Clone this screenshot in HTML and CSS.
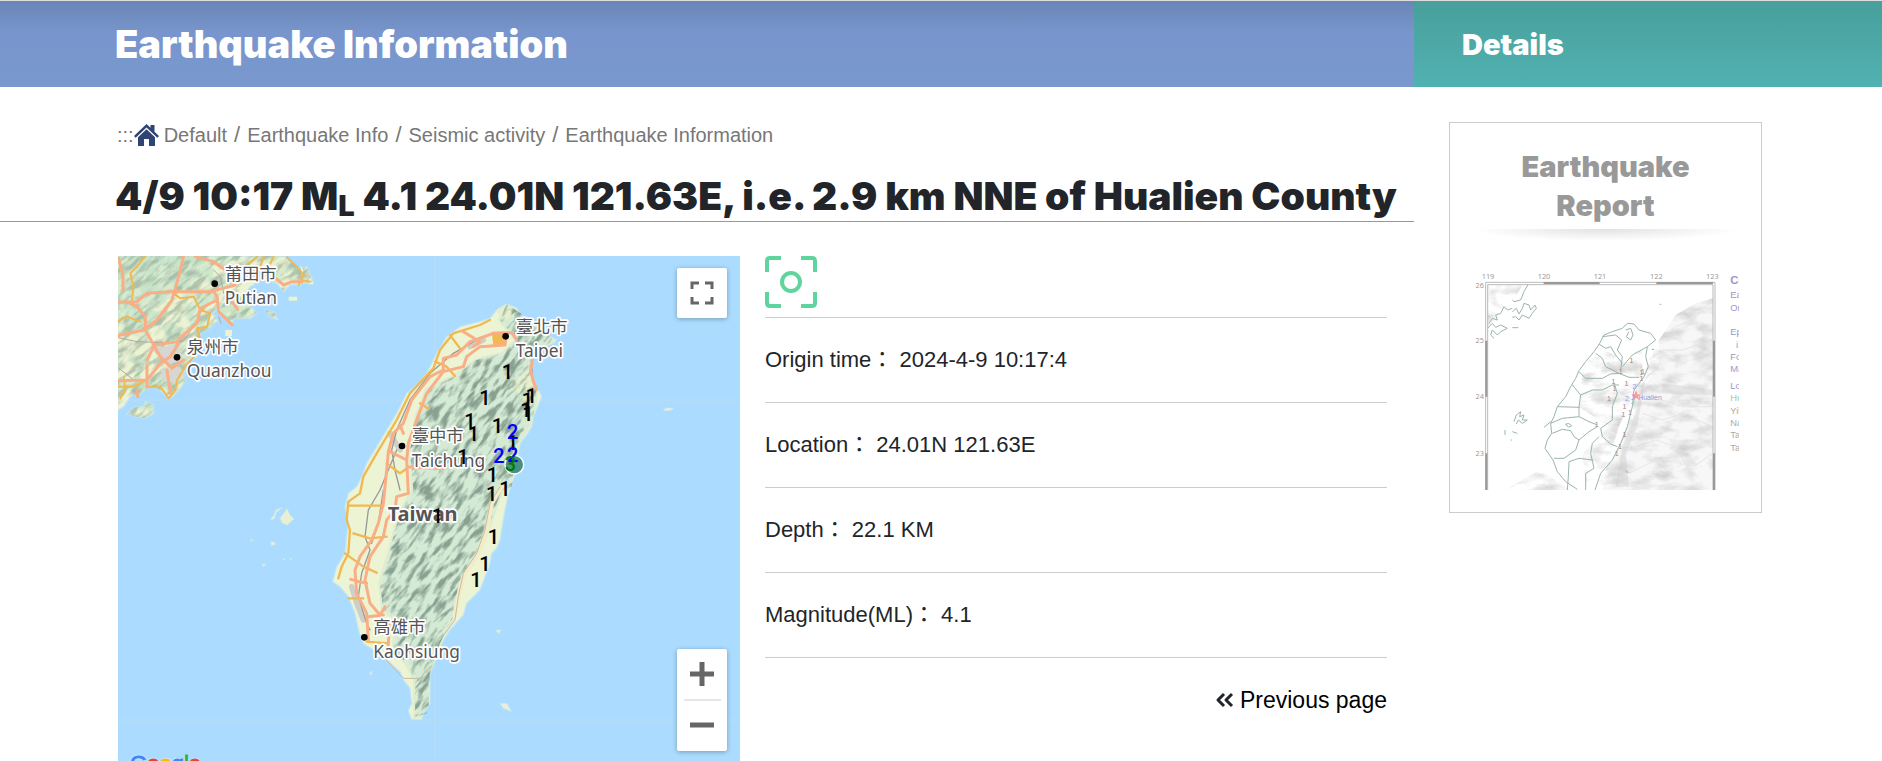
FILE: index.html
```html
<!DOCTYPE html>
<html lang="en">
<head>
<meta charset="utf-8">
<meta name="viewport" content="width=device-width, initial-scale=1">
<title>Earthquake Information</title>
<link rel="stylesheet" href="styles.css">
</head>
<body>
<div class="page">
  <main class="main">
    <header class="band band-main"><h2 class="band-title">Earthquake Information</h2></header>
    <nav class="crumbs" aria-label="Breadcrumb">
      <span>:::</span>
      <svg class="home" viewBox="0 0 25 22" aria-hidden="true"><path fill="#2f4474" d="M12.500 0 16.500 3.800V1h4v6.700l4.500 4.300-1.700 1.700L12.500 3.500 1.700 13.700 0 12z"/><path fill="#2f4474" d="M12.500 5.300 21 13.300V22h-6v-7h-5v7H4v-8.700z"/></svg>
      <a href="#">Default</a><i>/</i><a href="#">Earthquake Info</a><i>/</i><a href="#">Seismic activity</a><i>/</i><span>Earthquake Information</span>
    </nav>
    <h1 class="title">4/9 10:17 M<sub>L</sub> 4.1 24.01N 121.63E, i.e. 2.9 km NNE of Hualien County</h1>
    <div class="content">
      <section class="map" aria-label="Map">
        <svg class="map-art" viewBox="0 0 622 520" preserveAspectRatio="xMidYMin slice">
          <defs>
            <filter id="relief" x="0" y="0" width="1" height="1" color-interpolation-filters="sRGB">
              <feTurbulence type="fractalNoise" baseFrequency="0.06 0.2" numOctaves="3" seed="8"/>
              <feColorMatrix values="0 0 0 0 0.50  0 0 0 0 0.60  0 0 0 0 0.54  4 0 0 0 -1.75"/>
            </filter>
            <filter id="patches" x="0" y="0" width="1" height="1" color-interpolation-filters="sRGB">
              <feTurbulence type="fractalNoise" baseFrequency="0.05" numOctaves="3" seed="3"/>
              <feColorMatrix values="0 0 0 0 0.78  0 0 0 0 0.89  0 0 0 0 0.79  7 0 0 0 -3.2"/>
            </filter>
            <path id="island" d="M560 42 590 55 600 75 640 95 665 125 690 140 710 150 700 160 670 170 640 190 628 210 630 250 640 280 655 300 665 320 655 345 640 380 635 410 620 435 600 460 595 490 590 540 575 580 563 620 555 660 548 700 540 750 530 775 515 790 508 830 495 860 480 900 440 940 430 975 390 1020 370 1050 350 1100 330 1150 330 1240 310 1270 305 1288 275 1288 265 1262 275 1240 270 1195 250 1170 240 1145 200 1110 160 1080 130 1060 118 1030 105 970 85 920 60 890 38 875 50 830 75 790 80 740 85 700 75 650 85 610 110 590 125 560 140 520 170 470 200 420 230 370 260 310 290 285 320 250 350 190 380 140 420 110 480 95 510 85 530 60z"/>
            <path id="hills" d="M560 42 640 95 700 150 630 200 650 300 640 380 595 460 575 590 545 600 510 700 480 780 430 860 400 980 360 1060 330 1150 325 1270 285 1280 285 1170 260 1120 220 1080 230 990 190 960 180 880 210 780 225 720 245 660 280 600 270 480 290 380 320 300 400 260 470 210 550 190 590 150 540 90z"/>
            <path id="coast" d="M0 18H500L540 50 560 75 550 105 520 103 500 125 480 100 440 90 400 110 385 150 420 190 400 205 350 205 345 225 330 200 300 180 285 190 303 213 270 240 250 250 245 280 240 320 220 330 200 370 205 395 180 430 155 448 130 420 100 410 70 430 40 440 20 470 0 482zM545 60 570 50 588 95 560 100zM30 492 55 470 80 470 85 455 110 465 110 490 85 505 60 500zM445 180 470 185 482 208 460 202z"/>
            <clipPath id="clip-hills"><use href="#hills"/></clipPath>
            <clipPath id="clip-island"><use href="#island"/></clipPath>
            <clipPath id="clip-coast"><use href="#coast"/></clipPath>
          </defs>
          <rect width="900" height="760" y="-100" x="-100" fill="#abdcff"/>
          <path stroke="#bcdcf3" fill="none" d="M0 144H622M0 464H622M317 0V520"/>
          <g transform="translate(-1 -6) scale(.33333)">
            <use href="#coast" fill="#ecf3d3" stroke="#c5e6f2" stroke-width="4"/>
            <g clip-path="url(#clip-coast)">
              <path fill="#c9e6cd" opacity=".6" d="M0 18H300L250 80 150 150 60 200 0 230z"/>
              <g transform="rotate(-40) scale(3)">
                <rect x="-130" y="-20" width="330" height="330" filter="url(#patches)" opacity=".8"/>
                <rect x="-130" y="-20" width="330" height="330" filter="url(#relief)" opacity=".5"/>
              </g>
              <path fill="#d6d6d3" d="M100 295 180 285 200 330 150 345zM130 360 190 350 200 370 180 400 140 395z"/>
            </g>
            <path fill="#ecf3d3" d="M515 140h25v12h-25zM575 95h14v8h-14zM325 240h20v18h-20zM550 45l10 15-5 20z"/>
            <g fill="none" stroke-linejoin="round" stroke-linecap="round">
              <path stroke="#aaa" stroke-width="3" d="M0 262 60 275 140 278 200 272 250 200M290 60 310 80 320 130M305 200 312 220M0 350 50 390"/>
              <path stroke="#f0b951" stroke-width="6" d="M85 18 60 50 40 70 50 110 45 150M170 130 190 145 230 140 250 180 280 190 270 230 240 235 250 270M0 215 30 200 70 215M0 410 50 410 80 395M20 380 25 420 10 445M90 410 130 410 155 445 175 420 180 390 205 350 230 320M395 40 420 20M430 50 440 20M460 40 470 20M510 22 540 50 560 75 545 105M580 95 555 90"/>
              <path stroke="#f9ae86" stroke-width="9" d="M5 25 18 80 18 120M200 18 185 80 165 150 120 210 80 240 0 258M0 157 60 155 90 130 160 125 290 125 300 140 305 185 345 224M300 150 250 175 240 220 205 250 180 275 110 285 85 240 85 200 60 170 30 155M235 20 290 35 325 60M280 125 355 105M345 155 362 178M185 280 160 320 130 340 90 390 0 392M110 285 130 320 165 355 200 330M90 345 90 410M150 360 160 430M470 80 500 105 525 95 555 95M60 420 62 440M90 330 110 290"/>
            </g>
          </g>
          <g transform="translate(202 34) scale(.33333)">
            <use href="#island" fill="#edf4d4" stroke="#c5e6f2" stroke-width="4"/>
            <g clip-path="url(#clip-island)">
              <use href="#hills" fill="#d4ead5" stroke="#dcedd3" stroke-width="12"/>
              <path fill="#e5efcd" d="M520 60 550 40 590 70 560 90zM560 290 640 230 640 290 600 310z"/>
            </g>
            <g clip-path="url(#clip-hills)">
              <g transform="rotate(-52) scale(3)">
                <rect x="-380" y="20" width="600" height="500" filter="url(#relief)" opacity=".9"/>
              </g>
            </g>
            <g fill="none" stroke-linejoin="round" stroke-linecap="round">
              <path stroke="#f3ecc9" stroke-width="14" d="M545 590 515 640 500 720 475 790 430 860 415 920 405 980"/>
              <path stroke="#c9b9a0" stroke-width="3" d="M540 590 510 640 495 720 470 790 430 850 415 920 405 990 375 1030M195 1105 250 1165 300 1165 330 1130"/>
              <path stroke="#cfcfca" stroke-width="16" d="M95 890 110 940 130 990M210 430 240 480M450 170 490 150"/>
              <path stroke="#999" stroke-width="4" d="M520 130 470 150 400 190 330 250 270 330 230 420 215 480 225 540 240 600M230 480 180 600 145 660 135 740 150 780 125 850 115 920 140 1000 150 1020M190 600 175 700 155 760"/>
              <path stroke="#f0b951" stroke-width="7" d="M510 90 480 105 400 130 360 180 340 235 270 310 230 390 170 490 130 560 120 610 85 635 80 690 90 720 85 790 65 830 55 865M85 647 190 647M100 730 150 745 200 740M75 790 130 830 170 848M390 135 420 175M345 215 380 230 405 258M300 340 325 356M200 520 240 550 262 535M85 925 130 925M140 1055 205 1060"/>
              <path fill="#f0b951" stroke="none" d="M515 125h40v40h-35z"/>
              <path stroke="#f9ae86" stroke-width="9" d="M590 150 575 128 520 130 450 155 410 195 370 205 370 240 330 260 275 330 250 400 220 430 205 485 200 540 190 640 175 700 155 750 120 800 105 840 110 910 140 970 145 1050M560 130 555 165 480 170 440 200 430 230 370 245 320 310 290 390 265 460 260 510 210 485M430 125 480 155 460 170M260 510 265 610 230 620 225 660 200 690 190 740 150 800 135 870 150 940 180 975 195 950M240 405 250 430M265 530 370 536M145 980 190 975M92 868 140 880M208 1005 205 1065M637 210 632 240 640 275 650 298"/>
            </g>
            <path fill="#e9efd2" d="M1030 358 1045 353 1062 356 1050 362 1034 362zM527 1020h15l-5 12zM540 1240h20l15 25-25-10zM148 1150l10-8-5 14zM-120 685l15-20 5-10 10 20 12 12-20 18-15-5zM-150 690l12-15 5-15 22-8-20 15-6 20zM-148 755l8 0 8 8-14 4zM-174 822h12l-8 8zM-208 749h6v4h-6zM-110 806h5v4h-5zM-90 804h4v5h-4z" stroke="#c5e6f2" stroke-width="2"/>
          </g>
          <g class="places" transform="translate(-1 -6) scale(.33333)">
            <circle cx="293" cy="101" r="10"/><circle cx="180" cy="322" r="10"/>
            <text x="323" y="90">莆田市</text><text x="323" y="163">Putian</text>
            <text x="209" y="310">泉州市</text><text x="209" y="381">Quanzhou</text>
          </g>
          <g class="places" transform="translate(202 34) scale(.33333)">
            <circle cx="557" cy="139" r="10"/><circle cx="246" cy="468" r="10"/><circle cx="133" cy="1042" r="10"/>
            <text x="587" y="129">臺北市</text><text x="587" y="201">Taipei</text>
            <text x="275" y="457">臺中市</text><text x="275" y="531">Taichung</text>
            <text class="country" x="203" y="692">Taiwan</text>
            <text x="160" y="1030">高雄市</text><text x="160" y="1103">Kaohsiung</text>
          </g>
          <g class="intensity" transform="translate(202 34) scale(.33333)">
            <text x="562" y="267">1</text><text x="495" y="344">1</text><text x="450" y="415">1</text><text x="460" y="454">1</text><text x="532" y="429">1</text><text x="622" y="350">1</text><text x="634" y="339">1</text><text x="618" y="382">1</text><text x="624" y="394">1</text><text x="577" y="480">1</text><text x="429" y="522">1</text><text x="517" y="576">1</text><text x="515" y="634">1</text><text x="555" y="619">1</text><text x="352" y="699">1</text><text x="520" y="762">1</text><text x="495" y="844">1</text><text x="468" y="892">1</text>
            <circle cx="583" cy="524" r="28" fill="#4a9080" stroke="#fff" stroke-width="4"/>
            <g fill="#00f"><text x="578" y="448">2</text><text x="537" y="519">2</text><text x="578" y="515">2</text></g>
            <text x="571" y="544" fill="#007a00">3</text>
          </g>
        </svg>
        <button class="map-btn fullscreen" aria-label="Toggle fullscreen view"><svg width="24" height="24" viewBox="0 0 24 24"><path fill="none" stroke="#666" stroke-width="3" d="M2 8V2H9M15 2H22V8M22 16V22H15M9 22H2V16"/></svg></button>
        <div class="zoom">
          <button class="map-btn" aria-label="Zoom in"><svg width="24" height="24" viewBox="0 0 24 24"><path stroke="#666" stroke-width="5" d="M0 12H24M12 0V24"/></svg></button>
          <button class="map-btn" aria-label="Zoom out"><svg width="24" height="24" viewBox="0 0 24 24"><path stroke="#666" stroke-width="5" d="M0 12H24"/></svg></button>
        </div>
        <a class="google" href="#"><b class="g-blue">G</b><b class="g-red">o</b><b class="g-yellow">o</b><b class="g-blue">g</b><b class="g-green">l</b><b class="g-red">e</b></a>
      </section>
      <section class="facts">
        <div class="focus"><svg width="52" height="52" viewBox="0 0 52 52" fill="none" stroke="#5fd49d" stroke-width="4"><path d="M2 16V5Q2 2 5 2H16M36 2H47Q50 2 50 5V16M50 36V47Q50 50 47 50H36M16 50H5Q2 50 2 47V36"/><circle cx="26" cy="26" r="9"/></svg></div>
        <ul class="list">
          <li>Origin time： 2024-4-9 10:17:4</li>
          <li>Location： 24.01N 121.63E</li>
          <li>Depth： 22.1 KM</li>
          <li>Magnitude(ML)： 4.1</li>
        </ul>
        <a class="back" href="#"><svg width="19" height="16" viewBox="0 0 19 16" fill="none" stroke="#212529" stroke-width="3" stroke-linejoin="round"><path d="M9 2 3 8 9 14M17 2 11 8 17 14"/></svg>Previous page</a>
      </section>
    </div>
  </main>
  <aside class="side">
    <header class="band band-side"><h2 class="side-title">Details</h2></header>
    <a class="card" href="#">
      <h3 class="card-title">Earthquake Report</h3>
      <div class="card-shade"></div>
      <svg class="report" viewBox="129 96 804 654">
        <defs>
          <filter id="seabed" x="0" y="0" width="1" height="1" color-interpolation-filters="sRGB">
            <feTurbulence type="fractalNoise" baseFrequency="0.015 0.03" numOctaves="5" seed="5"/>
            <feColorMatrix values="0 0 0 0 0.78  0 0 0 0 0.78  0 0 0 0 0.78  2.200 0 0 0 -0.9"/>
          </filter>
          <clipPath id="sea"><path d="M852 175 800 190 740 225 690 300 660 370 620 450 600 550 560 640 510 700 495 750H852zM176 135H280L250 190 200 240 176 260zM230 750 330 690 380 720 420 750zM500 320 570 350 640 330 640 400 570 560 530 690 470 740 460 640 540 560 450 500 460 400z"/></clipPath>
        </defs>
        <path fill="#f1f1f1" opacity=".6" d="M852 175 800 190 740 225 690 300 690 370 640 450 600 550 560 640 520 750H852z"/>
        <path fill="#ccc" opacity=".4" d="M690 380 650 410 640 470 625 560 590 640 600 740 560 740 580 620 620 520 640 430zM700 430 850 450 850 465 700 460z"/>
        <g clip-path="url(#sea)"><rect x="170" y="130" width="690" height="620" filter="url(#seabed)" opacity=".8"/></g>
        <g fill="none" stroke="#ddd" stroke-width="2"><path d="M690 300 740 260 790 240 850 180M660 360 700 330 760 330 850 300M640 520 700 540 760 520 850 560M620 620 680 600 740 620 780 690 850 640M700 480 760 500 850 500M600 700 680 660 720 700"/></g>
        <g fill="none" stroke="#999" stroke-width="2"><path d="M170 750V127H858V750M176 750V134H852V750"/></g>
        <path stroke="#999" stroke-width="6" d="M344 129H512M682 129H852M172 302V470M172 640V750M855 302V470M855 640V750"/>
        <g fill="none" stroke="#9bb5ad" stroke-width="3" stroke-linejoin="round">
          <path d="M580 265 595 250 615 252 630 270 665 280 680 300 655 320 650 350 658 380 645 410 615 450 610 500 595 560 575 610 550 660 515 700 498 750M580 265 550 275 525 285 512 310 495 335 470 365 450 392 440 415 425 440 410 470 385 500 375 530 365 550 368 580 355 600 348 625 372 660 385 695 410 725 445 748"/>
          <path d="M520 290 560 285 578 300 565 330 580 350 575 390M510 312 530 325 545 320 560 345 580 370M500 340 520 355 530 380 570 400 600 412 630 412M655 320 610 345 580 380M450 395 470 415 520 415 545 402 570 400M430 435 455 465 490 450 520 450 550 435 570 435M555 430 565 460 550 500 550 540 515 565M455 465 450 500 450 530 480 545 505 555M385 500 452 502M365 550 400 535 450 530M370 580 400 568 425 572 435 590 450 600 480 575 505 560M515 565 520 590 545 612 565 620M450 600 440 630 405 655 375 655M510 590 490 610 485 640 495 685 470 700 470 750M415 750 418 710 420 665 450 655 490 660M345 562 365 545M590 270 605 265 612 285 605 300 592 290 600 275M410 552q10-5 18 5-10 10-18-5"/>
          <path d="M297 134 285 155 275 180 255 185 250 180M250 215 262 205 270 222 280 205 285 190 300 195 305 210 318 195 322 205 310 220 300 235 280 225 270 240 260 230 250 232M250 205 235 210 225 200 215 220 200 225 205 240 190 235 180 250M176 265 190 250 200 262 215 255 235 265 215 275 205 285 190 270 185 285 195 295M250 263h18M255 545 262 525 275 515 272 530 285 525 280 540 295 540 280 550 268 540 262 552M228 570v15M250 575 265 580M245 600h4M668 328h8M692 193h5M590 694l8 4"/>
        </g>
        <path fill="#faa" stroke="#f99" stroke-width="4" d="M621 456 624 464 630 465 625 469 627 475 621 471 615 475 617 469 612 465 618 464z"/>
        <g class="axis"><text x="177" y="117">119</text><text x="345" y="117">120</text><text x="513" y="117">121</text><text x="682" y="117">122</text><text x="850" y="117">123</text><text x="152" y="143">26</text><text x="152" y="310">25</text><text x="152" y="478">24</text><text x="152" y="647">23</text></g>
        <g class="quakes"><text x="607" y="368">1</text><text x="575" y="401">1</text><text x="637" y="404">1</text><text x="642" y="401">1</text><text x="637" y="422">1</text><text x="553" y="433">1</text><text x="556" y="452">1</text><text x="592" y="439">1</text><text x="540" y="484">1</text><text x="586" y="508">1</text><text x="583" y="532">1</text><text x="603" y="526">1</text><text x="503" y="561">1</text><text x="586" y="590">1</text><text x="573" y="627">1</text><text x="563" y="648">1</text>
          <g class="two"><text x="616" y="448">2</text><text x="594" y="482">2</text><text x="613" y="480">2</text></g><text class="three" x="611" y="492">3</text><text class="town" x="663" y="480">Hualien</text></g>
        <svg x="900" y="96" width="30" height="560" viewBox="900 96 30 560">
          <g class="notes"><text class="strong" x="904" y="133">Central Weather</text><text x="904" y="173">Earthquake</text><text x="904" y="212">Origin</text><text x="904" y="286">Epicenter</text><text x="921" y="323">i.e.</text><text x="904" y="360">Focal</text><text x="904" y="396">Magnitude</text><text x="904" y="447">Local</text><text class="green" x="904" y="483">Hualien</text><text class="gray" x="904" y="521">Yilan</text><text class="gray" x="904" y="559">Nantou</text><text class="gray" x="904" y="595">Taichung</text><text class="gray" x="904" y="633">Taitung</text></g>
        </svg>
      </svg>
    </a>
  </aside>
</div>
</body>
</html>
```
FILE: styles.css
```css
* { box-sizing: border-box; }
body {
  margin: 0;
  background: #fff;
  color: #212529;
  font-family: "Liberation Sans", "Noto Sans CJK TC", sans-serif;
  font-size: 22px;
}
h1, h2, h3 { margin: 0; font-family: Inter, "Liberation Sans", sans-serif; font-weight: 900; }
a { color: inherit; text-decoration: none; }
button { padding: 0; border: 0; background: none; }
.page {
  display: flex;
  height: 100vh;
  overflow: hidden;
  border-top: 1px solid #ddd;
}
.main { flex: 1; min-width: 0; }
.side { flex: 0 0 468px; }
.band { display: flex; align-items: center; height: 86px; color: #fff; }
.band-main { padding-left: 115px; background: linear-gradient(#6a85b6, #7896cd 32px, #7998ce); }
.band-side { padding-left: 48px; background: linear-gradient(#489f9b, #51b2b2); }
.band-title { font-size: 38px; line-height: 46px; }
.side-title { padding-top: 2px; font-size: 29px; line-height: 36px; }
.crumbs {
  display: flex;
  align-items: center;
  margin: 34px 0 0 117px;
  height: 28px;
  font-size: 20px;
  color: #777;
  white-space: nowrap;
}
.crumbs i { font-style: normal; font-size: 22px; padding: 0 7px; }
.home { width: 25px; height: 22px; margin-right: 5px; }
.title {
  padding: 21px 0 0 115px;
  height: 73px;
  border-bottom: 1px solid #999;
  font-size: 39px;
  line-height: 52px;
  white-space: nowrap;
}
.title sub { font-size: 29px; line-height: 0; vertical-align: baseline; position: relative; top: 6px; }
.content {
  display: grid;
  grid-template-columns: 1fr 1fr;
  gap: 25px;
  padding: 34px 27px 0 118px;
}
.map { position: relative; height: 520px; overflow: hidden; background: #abdcff; }
.map-art { display: block; width: 100%; height: 100%; }
.places text {
  font-family: "Noto Sans", "Noto Sans CJK TC", sans-serif;
  font-size: 52px;
  fill: #555;
  stroke: #fff;
  stroke-width: 10px;
  stroke-linejoin: round;
  paint-order: stroke;
}
.places .country { font-weight: 700; font-size: 60px; }
.intensity text { font-family: Roboto, sans-serif; font-weight: 500; font-size: 60px; text-anchor: middle; }
.map-btn { display: flex; align-items: center; justify-content: center; width: 50px; height: 50px; }
.fullscreen, .zoom {
  position: absolute;
  right: 13px;
  background: #fff;
  border-radius: 2px;
  box-shadow: 0 1px 5px rgba(0, 0, 0, .3);
}
.fullscreen { top: 12px; }
.zoom { bottom: 25px; }
.zoom .map-btn + .map-btn { height: 52px; background: linear-gradient(#e6e6e6, #e6e6e6) center top / 37px 2px no-repeat; }
.google {
  position: absolute;
  left: 12px;
  bottom: -3px;
  font-size: 22px;
  line-height: 30px;
}
.google b { font-weight: 400; -webkit-text-stroke: 1px currentColor; text-shadow: 0 0 2px #fff, 0 0 2px #fff; }
.g-blue { color: #4285f4; }
.g-red { color: #e94235; }
.g-yellow { color: #fabb05; }
.g-green { color: #34a853; }
.focus { height: 62px; border-bottom: 1px solid #ccc; }
.focus svg { display: block; }
.list { margin: 0; padding: 0; list-style: none; }
.list li { height: 85px; line-height: 84px; border-bottom: 1px solid #ccc; }
.back { display: flex; align-items: center; justify-content: flex-end; gap: 6px; height: 84px; color: #000; font-size: 23px; }
.card {
  display: block;
  width: 313px;
  margin: 35px 0 0 35px;
  padding: 24px 22px 22px;
  border: 1px solid #ccc;
}
.card-title { width: 200px; margin: 0 auto; font-size: 29px; line-height: 39px; text-align: center; color: #999; }
.card-shade { height: 12px; margin-top: 4px; background: radial-gradient(ellipse 50% 100% at 50% 0, #e2e2e2, #fff); }
.report { display: block; width: 268px; height: 218px; margin-top: 31px; font-family: "Liberation Sans", sans-serif; }
.axis text { font-size: 22px; fill: #999; text-anchor: middle; font-family: "Noto Sans", sans-serif; }
.quakes text { font-size: 21px; fill: #a08888; text-anchor: middle; }
.quakes .two text { fill: #99f; }
.quakes .three { fill: #9c9; }
.quakes .town { fill: #99c; }
.notes text { font-size: 28px; fill: #99c; }
.notes .strong { font-weight: 700; font-size: 34px; }
.notes .green { fill: #9c9; }
.notes .gray { fill: #aaa; }
```
